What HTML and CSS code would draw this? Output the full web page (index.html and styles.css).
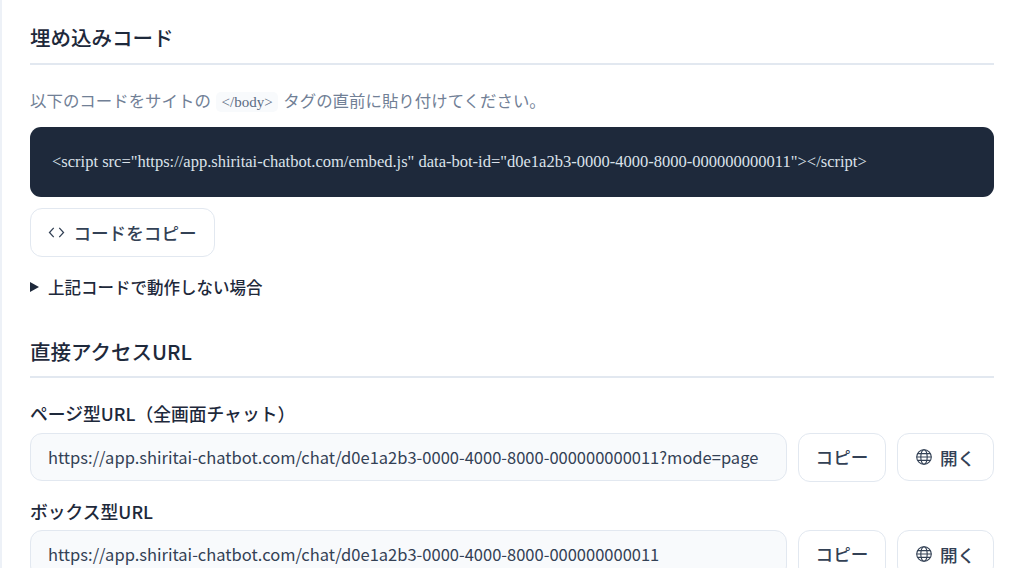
FILE: index.html
```html
<!DOCTYPE html>
<html lang="ja">
<head>
<meta charset="utf-8">
<title>埋め込みコード</title>
<link rel="stylesheet" href="styles.css">
</head>
<body>
<main class="card">
  <section class="section-embed">
    <h2 class="heading">埋め込みコード</h2>
    <p class="desc">以下のコードをサイトの <code class="tag">&lt;/body&gt;</code> タグの直前に貼り付けてください。</p>
    <pre class="code">&lt;script src="https://app.shiritai-chatbot.com/embed.js" data-bot-id="d0e1a2b3-0000-4000-8000-000000000011"&gt;&lt;/script&gt;</pre>
    <button class="btn btn-code" type="button">
      <svg class="icon-code" viewBox="0 0 16 16" aria-hidden="true"><path d="M5.4 3.7 1.4 8l4 4.3M10.6 3.7l4 4.3-4 4.3"/></svg>
      コードをコピー
    </button>
    <div class="details"><span class="caret"></span>上記コードで動作しない場合</div>
  </section>
  <section>
    <h2 class="heading heading-tight">直接アクセスURL</h2>
    <div class="field">
      <label class="label">ページ型URL（全画面チャット）</label>
      <div class="row">
        <div class="url">https://app.shiritai-chatbot.com/chat/d0e1a2b3-0000-4000-8000-000000000011?mode=page</div>
        <button class="btn btn-copy" type="button">コピー</button>
        <button class="btn btn-open" type="button">
          <svg class="icon-globe" viewBox="0 0 16 16" aria-hidden="true"><circle cx="8" cy="8" r="7.3"/><ellipse cx="8" cy="8" rx="3.2" ry="7.3"/><path d="M.7 8h14.6M1.7 4.6h12.6M1.7 11.4h12.6"/></svg>
          開く
        </button>
      </div>
    </div>
    <div class="field">
      <label class="label">ボックス型URL</label>
      <div class="row">
        <div class="url">https://app.shiritai-chatbot.com/chat/d0e1a2b3-0000-4000-8000-000000000011</div>
        <button class="btn btn-copy" type="button">コピー</button>
        <button class="btn btn-open" type="button">
          <svg class="icon-globe" viewBox="0 0 16 16" aria-hidden="true"><circle cx="8" cy="8" r="7.3"/><ellipse cx="8" cy="8" rx="3.2" ry="7.3"/><path d="M.7 8h14.6M1.7 4.6h12.6M1.7 11.4h12.6"/></svg>
          開く
        </button>
      </div>
    </div>
  </section>
</main>
</body>
</html>
```

FILE: styles.css
```css
* { box-sizing: border-box; }
html, body { margin: 0; height: 568px; overflow: hidden; background: #fff; }
body {
  font-family: "Noto Sans CJK JP", "Noto Sans", sans-serif;
  color: #1e293b;
}
.card {
  border-left: 2px solid #edf1f7;
  padding: 22px 30px 0 28px;
}
.section-embed { margin-bottom: 36px; }
.heading {
  margin: 0;
  font-size: 20.5px;
  line-height: 30px;
  font-weight: 500;
  color: #1e293b;
  padding-bottom: 11px;
  border-bottom: 2.5px solid #e2e8f0;
}
.heading-tight { padding-bottom: 10px; }
.desc {
  margin: 21px 0 0;
  font-size: 16.45px;
  line-height: 28px;
  color: #718096;
}
.tag {
  font-family: "Liberation Serif", serif;
  font-size: 15px;
  background: #f8fafc;
  color: #5b6b82;
  margin: 0 1.5px;
  padding: 2px 5.5px;
  border-radius: 5px;
}
.code {
  margin: 11px 0 0;
  height: 70px;
  padding: 0 22px;
  display: flex;
  align-items: center;
  background: #1e293b;
  color: #dbe2ea;
  border-radius: 11px;
  font-family: "Liberation Serif", serif;
  font-size: 16.52px;
  white-space: pre;
}
.btn {
  display: inline-flex;
  align-items: center;
  justify-content: center;
  font-family: inherit;
  font-weight: 500;
  color: #334155;
  background: #fff;
  border: 1.5px solid #e2e8f0;
  border-radius: 12px;
  font-size: 17.6px;
  padding: 0;
}
.btn-code { margin-top: 11px; width: 185px; height: 49px; gap: 8px; }
.icon-code { width: 17px; height: 17px; fill: none; stroke: #334155; stroke-width: 1.2; }
.details {
  margin-top: 17px;
  display: flex;
  align-items: center;
  font-size: 16.5px;
  line-height: 26px;
  font-weight: 500;
  color: #1e293b;
}
.caret {
  width: 0; height: 0;
  margin-right: 9px;
  border-left: 9px solid #1e293b;
  border-top: 5px solid transparent;
  border-bottom: 5px solid transparent;
}
.field { margin-top: 23px; }
.field + .field { margin-top: 17px; }
.label {
  display: block;
  font-size: 17.8px;
  line-height: 24px;
  font-weight: 500;
  color: #1e293b;
  margin-bottom: 8px;
}
.field + .field .label { margin-bottom: 7px; }
.row { display: flex; gap: 11px; align-items: flex-start; }
.url {
  flex: 1;
  height: 48px;
  display: flex;
  align-items: center;
  padding: 0 17px;
  background: #f8fafc;
  border: 1.5px solid #e2e8f0;
  border-radius: 12px;
  font-size: 16.5px;
  color: #334155;
  white-space: nowrap;
}
.btn-copy { width: 88px; height: 49px; padding-bottom: 3px; }
.btn-open { width: 97px; height: 48px; gap: 8px; }
.icon-globe { width: 16px; height: 16px; fill: none; stroke: #334155; stroke-width: 1.1; }
```
